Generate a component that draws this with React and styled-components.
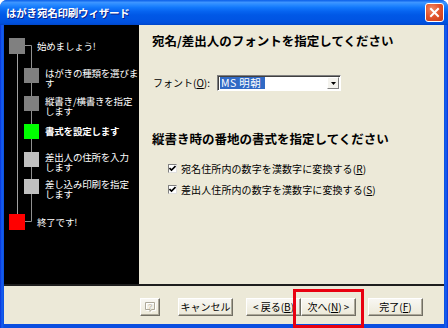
import React from 'react';
import styled, { createGlobalStyle } from 'styled-components';

const GlobalStyle = createGlobalStyle`
  html, body { margin: 0; padding: 0; background: #ffffff; }
  body { font-family: "Noto Sans CJK JP", "Noto Sans", sans-serif; overflow: hidden; }
  * { box-sizing: border-box; }
`;

const Window = styled.div`
  position: relative;
  width: 448px;
  height: 328px;
  display: flex;
  flex-direction: column;
  background: linear-gradient(to right, #0831d9 0px, #1660f0 2px, #0a4ee0 4px, #0a4ee0 444px, #1660f0 446px, #0831d9 448px);
  border-radius: 7px 7px 0 0;
  overflow: hidden;
`;

const TitleBar = styled.div`
  height: 25px;
  flex: none;
  display: flex;
  align-items: center;
  justify-content: space-between;
  padding: 0 4px 0 6px;
  background: linear-gradient(to bottom, #0a5ee8 0%, #3d95ff 10%, #2a8bff 18%, #1278fb 30%, #0664f0 45%, #0058e6 60%, #0054e3 80%, #0050dd 92%, #0046c8 100%);
`;

const TitleText = styled.span`
  color: #ffffff;
  font-size: 10.5px;
  font-weight: 700;
  line-height: 12px;
  text-shadow: 1px 1px 0 #0a1f8a;
  letter-spacing: -0.2px;
`;

const CloseButton = styled.div`
  width: 19px;
  height: 19px;
  border: 1px solid #ffffff;
  border-radius: 3px;
  background: radial-gradient(circle at 35% 30%, #f08a66 0%, #e3552e 45%, #c83b17 100%);
  display: flex;
  align-items: center;
  justify-content: center;
`;

const Client = styled.div`
  flex: 1;
  margin: 0 4px 4px 4px;
  background: #ece9d8;
  display: flex;
  flex-direction: column;
`;

const Main = styled.div`
  height: 259px;
  flex: none;
  display: flex;
`;

const SidePanel = styled.div`
  width: 135px;
  flex: none;
  background: #000000;
  position: relative;
`;

const TreeLines = styled.svg`
  position: absolute;
  left: 0;
  top: 0;
  width: 135px;
  height: 259px;
`;

const StepList = styled.div`
  position: relative;
  display: flex;
  flex-direction: column;
  padding-top: 13px;
`;

const Step = styled.div`
  display: flex;
  align-items: flex-start;
  height: ${p => p.$h}px;
  padding-left: ${p => (p.$level === 0 ? 5 : 20)}px;
  gap: ${p => (p.$level === 0 ? 12 : 6)}px;
`;

const Square = styled.div`
  flex: none;
  width: ${p => (p.$level === 0 ? 16 : 15)}px;
  height: ${p => (p.$level === 0 ? 16 : 15)}px;
  background: ${p => p.$color};
`;

const StepText = styled.div`
  color: #ffffff;
  font-size: 9.5px;
  font-weight: ${p => (p.$current ? 700 : 400)};
  line-height: ${p => p.$lh}px;
  white-space: pre-line;
  letter-spacing: -0.2px;
`;

const ContentPanel = styled.div`
  flex: 1;
  padding: 9px 0 0 13px;
  display: flex;
  flex-direction: column;
`;

const Heading = styled.div`
  font-size: 12.5px;
  font-weight: 700;
  line-height: 14px;
  height: 14px;
  color: #000000;
  margin-top: ${p => p.$mt || 0}px;
`;

const FontRow = styled.div`
  margin-top: 27px;
  height: 16px;
  display: flex;
  align-items: center;
  padding-left: 1px;
`;

const Label = styled.span`
  width: 64px;
  font-size: 10px;
  line-height: 12px;
  color: #000000;
`;

const Mnemonic = styled.span`
  text-decoration: underline;
  text-underline-offset: 1px;
`;

const Combo = styled.div`
  width: 124px;
  height: 16px;
  background: #ffffff;
  border: 1px solid;
  border-color: #808080 #ffffff #ffffff #808080;
  box-shadow: inset 1px 1px 0 #404040;
  display: flex;
  align-items: center;
  padding: 1px 1px 1px 2px;
`;

const Selected = styled.span`
  background: #316ac5;
  color: #ffffff;
  font-size: 10.5px;
  line-height: 12px;
  height: 12px;
  padding: 0 4px 0 1px;
  letter-spacing: 0.4px;
`;

const DropButton = styled.div`
  margin-left: auto;
  width: 12px;
  height: 12px;
  background: #f4f3ee;
  border: 1px solid;
  border-color: #ffffff #808080 #808080 #ffffff;
  display: flex;
  align-items: center;
  justify-content: center;
`;

const CheckList = styled.div`
  margin-top: 12px;
  margin-left: 16px;
  display: flex;
  flex-direction: column;
`;

const CheckRow = styled.div`
  height: 21px;
  display: flex;
  align-items: center;
  gap: 4px;
`;

const CheckBox = styled.div`
  width: 9px;
  height: 9px;
  background: #ffffff;
  border: 1px solid;
  border-color: #808080 #e0e0e0 #e0e0e0 #808080;
  display: flex;
  align-items: center;
  justify-content: center;
`;

const CheckLabel = styled.span`
  font-size: 10px;
  line-height: 12px;
  color: #000000;
  letter-spacing: 0.1px;
`;

const Separator = styled.div`
  height: 2px;
  flex: none;
  background: #1e1e1e;
`;

const ButtonBar = styled.div`
  flex: 1;
  display: flex;
  align-items: flex-start;
  padding: 12px 20px 0 136px;
`;

const Button = styled.div`
  width: ${p => p.$w || 55}px;
  height: 18px;
  margin-left: ${p => p.$ml || 0}px;
  background: linear-gradient(to bottom, #f8f7f3, #ece9d8);
  border: 1px solid;
  border-color: #ffffff #716f64 #716f64 #ffffff;
  box-shadow: inset -1px -1px 0 #aca899;
  display: flex;
  align-items: center;
  justify-content: center;
  font-size: 10px;
  line-height: 12px;
  color: #000000;
  white-space: nowrap;
`;

const Highlight = styled.div`
  position: absolute;
  left: 293px;
  top: 289px;
  width: 71px;
  height: 39px;
  border: 3px solid #e80010;
`;

const steps = [
  { text: '始めましょう!', level: 0, color: '#808080', h: 30 },
  { text: 'はがきの種類を選びま\nす', level: 1, color: '#808080', h: 28 },
  { text: '縦書き/横書きを指定\nします', level: 1, color: '#808080', h: 28 },
  { text: '書式を設定します', level: 1, color: '#00ff00', h: 28, current: true },
  { text: '差出人の住所を入力\nします', level: 1, color: '#c0c0c0', h: 27 },
  { text: '差し込み印刷を指定\nします', level: 1, color: '#c0c0c0', h: 35 },
  { text: '終了です!', level: 0, color: '#ff0000', h: 16 },
];

function CheckMark() {
  return (
    <svg width="7" height="7" viewBox="0 0 7 7">
      <path d="M0.5 3 L2.5 5 L6.5 1" stroke="#000" strokeWidth="1.6" fill="none" />
    </svg>
  );
}

function HelpIcon() {
  return (
    <svg width="13" height="13" viewBox="0 0 13 13">
      <path d="M2.5 2.5 h9 v7 h-3 l-1.5 2 v-2 h-4.5 z" stroke="#ffffff" fill="none" />
      <path d="M1.5 1.5 h9 v7 h-3 l-1.5 2 v-2 h-4.5 z" stroke="#aca899" fill="none" />
      <text x="6" y="7.5" fontSize="7.5" fontFamily="Liberation Sans, sans-serif" textAnchor="middle" fill="#aca899">?</text>
    </svg>
  );
}

export default function App() {
  return (
    <>
      <GlobalStyle />
      <Window>
        <TitleBar>
          <TitleText>はがき宛名印刷ウィザード</TitleText>
          <CloseButton>
            <svg width="11" height="11" viewBox="0 0 11 11">
              <path d="M2 2 L9 9 M9 2 L2 9" stroke="#fff" strokeWidth="2" strokeLinecap="square" />
            </svg>
          </CloseButton>
        </TitleBar>
        <Client>
          <Main>
            <SidePanel>
              <TreeLines viewBox="0 0 135 259">
                <path d="M13.5 28 V189" stroke="#a0a0a0" strokeWidth="1" fill="none" />
                <path d="M21 20.5 H27.5 V196.5 H21" stroke="#909090" strokeWidth="1" fill="none" />
              </TreeLines>
              <StepList>
                {steps.map((s, i) => (
                  <Step key={i} $h={s.h} $level={s.level}>
                    <Square $level={s.level} $color={s.color} />
                    <StepText
                      $current={s.current}
                      $lh={s.text.includes('\n') ? 10 : s.level === 0 ? 16 : 15}
                    >
                      {s.text}
                    </StepText>
                  </Step>
                ))}
              </StepList>
            </SidePanel>
            <ContentPanel>
              <Heading>宛名/差出人のフォントを指定してください</Heading>
              <FontRow>
                <Label>
                  フォント(<Mnemonic>O</Mnemonic>):
                </Label>
                <Combo>
                  <Selected>MS 明朝</Selected>
                  <DropButton>
                    <svg width="5" height="3" viewBox="0 0 5 3">
                      <path d="M0 0 H5 L2.5 3 Z" fill="#000" />
                    </svg>
                  </DropButton>
                </Combo>
              </FontRow>
              <Heading $mt={41}>縦書き時の番地の書式を指定してください</Heading>
              <CheckList>
                <CheckRow>
                  <CheckBox><CheckMark /></CheckBox>
                  <CheckLabel>
                    宛名住所内の数字を漢数字に変換する(<Mnemonic>R</Mnemonic>)
                  </CheckLabel>
                </CheckRow>
                <CheckRow>
                  <CheckBox><CheckMark /></CheckBox>
                  <CheckLabel>
                    差出人住所内の数字を漢数字に変換する(<Mnemonic>S</Mnemonic>)
                  </CheckLabel>
                </CheckRow>
              </CheckList>
            </ContentPanel>
          </Main>
          <Separator />
          <ButtonBar>
            <Button $w={20}><HelpIcon /></Button>
            <Button $ml={18}>キャンセル</Button>
            <Button $ml={13}>&lt; 戻る(<Mnemonic>B</Mnemonic>)</Button>
            <Button>次へ(<Mnemonic>N</Mnemonic>) &gt;</Button>
            <Button $ml={12}>完了(<Mnemonic>F</Mnemonic>)</Button>
          </ButtonBar>
        </Client>
        <Highlight />
      </Window>
    </>
  );
}
